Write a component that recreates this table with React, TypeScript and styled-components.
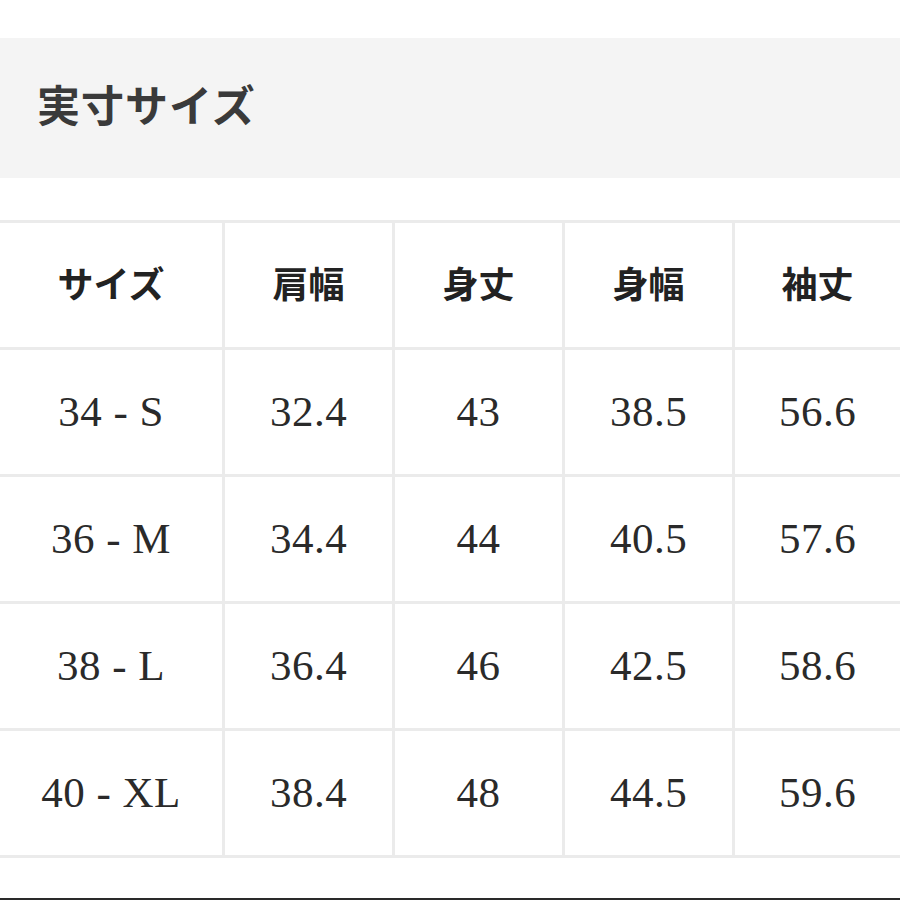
import styled, { createGlobalStyle } from 'styled-components';

const GlobalStyle = createGlobalStyle`
  html, body {
    margin: 0;
    padding: 0;
    background: #fff;
  }
`;

const columns = ['サイズ', '肩幅', '身丈', '身幅', '袖丈'];

const rows = [
  ['34 - S', '32.4', '43', '38.5', '56.6'],
  ['36 - M', '34.4', '44', '40.5', '57.6'],
  ['38 - L', '36.4', '46', '42.5', '58.6'],
  ['40 - XL', '38.4', '48', '44.5', '59.6'],
];

const App = () => {
  return (
    <Page>
      <GlobalStyle />
      <TitleBand>
        <Title>実寸サイズ</Title>
      </TitleBand>
      <SizeTable>
        {columns.map((label) => (
          <Cell key={label} $head>
            {label}
          </Cell>
        ))}
        {rows.map((row) =>
          row.map((value, i) => <Cell key={row[0] + i}>{value}</Cell>)
        )}
      </SizeTable>
      <BottomRule />
    </Page>
  );
};

const Page = styled.div`
  display: flex;
  flex-direction: column;
  width: 900px;
  height: 900px;
  padding-top: 38px;
  box-sizing: border-box;
  overflow: hidden;
  background-color: #fff;
`;

const TitleBand = styled.div`
  display: flex;
  align-items: center;
  height: 140px;
  padding-left: 37px;
  padding-bottom: 10px;
  box-sizing: border-box;
  background-color: #f4f4f4;
`;

const Title = styled.h1`
  margin: 0;
  font-family: 'Noto Sans CJK JP', 'Noto Sans', sans-serif;
  font-weight: 700;
  font-size: 43px;
  letter-spacing: 1px;
  color: #3a3a3a;
`;

const SizeTable = styled.div`
  display: grid;
  grid-template-columns: 222px 167px 167px 167px 1fr;
  grid-auto-rows: 124px;
  gap: 3px;
  margin-top: 42px;
  padding: 3px 0;
  background-color: #ebebeb;
`;

const Cell = styled.div<{ $head?: boolean }>`
  display: flex;
  align-items: center;
  justify-content: center;
  padding-bottom: ${({ $head }) => ($head ? '6px' : '2px')};
  box-sizing: border-box;
  background-color: #fff;
  color: ${({ $head }) => ($head ? '#222' : '#2a2a2a')};
  font-family: ${({ $head }) =>
    $head
      ? "'Noto Sans CJK JP', sans-serif"
      : "'Liberation Serif', 'Noto Sans CJK JP', serif"};
  font-weight: ${({ $head }) => ($head ? 700 : 400)};
  font-size: ${({ $head }) => ($head ? '36px' : '43px')};
  letter-spacing: ${({ $head }) => ($head ? '0' : '0.5px')};
`;

const BottomRule = styled.div`
  margin-top: auto;
  height: 2px;
  background-color: #2a2a2a;
`;

export default App;
